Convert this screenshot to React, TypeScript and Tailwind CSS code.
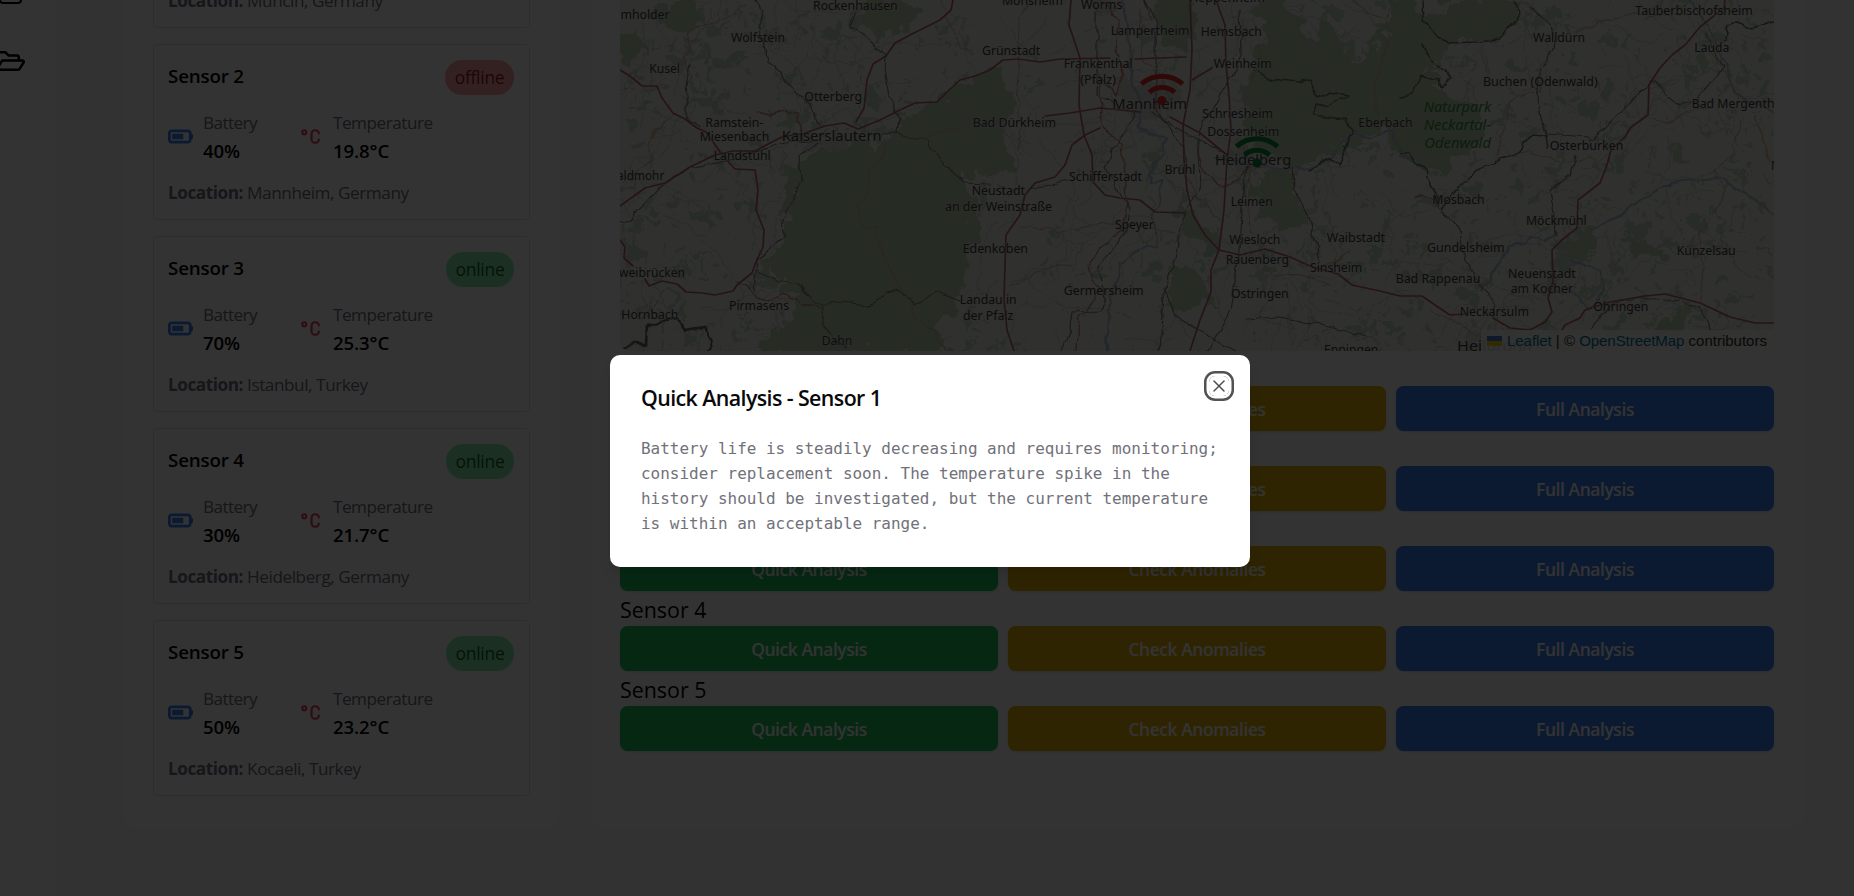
import React from "react";
import { X } from "lucide-react";
import { FaRegFolderOpen } from "react-icons/fa";
import { FaBatteryThreeQuarters } from "react-icons/fa6";
import { TbTemperatureCelsius } from "react-icons/tb";

type Sensor = { name: string; status: "online" | "offline"; battery: string; temperature: string; location: string };

const sensors: Sensor[] = [
  { name: "Sensor 1", status: "online", battery: "60%", temperature: "22.5°C", location: "Muncin, Germany" },
  { name: "Sensor 2", status: "offline", battery: "40%", temperature: "19.8°C", location: "Mannheim, Germany" },
  { name: "Sensor 3", status: "online", battery: "70%", temperature: "25.3°C", location: "Istanbul, Turkey" },
  { name: "Sensor 4", status: "online", battery: "30%", temperature: "21.7°C", location: "Heidelberg, Germany" },
  { name: "Sensor 5", status: "online", battery: "50%", temperature: "23.2°C", location: "Kocaeli, Turkey" },
];

// Map labels: text, left x, right x, vertical centre, font size
type Label = [string, number, number, number, number?];
const labels: Label[] = [
  ["mholder", 620.5, 669.5, 15], ["Rockenhausen", 813, 897.7, 6], ["Wolfstein", 731, 785, 38.3],
  ["Kusel", 649.3, 680, 68.5], ["Otterberg", 804.3, 862, 96.5], ["Ramstein-", 705.3, 763.3, 122.5],
  ["Miesenbach", 699.7, 769.3, 137], ["Landstuhl", 713.7, 770.7, 156], ["Kaiserslautern", 781.7, 881.7, 136.5, 15],
  ["aldmohr", 617, 664.3, 175.5], ["weibrücken", 619, 685, 272.5], ["Pirmasens", 729, 789, 306],
  ["Hornbach", 621.3, 678.3, 315], ["Dahn", 821.7, 852.3, 341], ["Bad Dürkheim", 972.7, 1056, 122.5],
  ["Grünstadt", 982, 1040.3, 51], ["Neustadt", 971.7, 1025, 191], ["an der Weinstraße", 945, 1052, 207],
  ["Edenkoben", 962.7, 1028, 249], ["Landau in", 959.7, 1016.7, 300], ["der Pfalz", 963, 1013.3, 315.5],
  ["Monsheim", 1002, 1063, 1], ["Worms", 1081, 1122.3, 4.5], ["Lampertheim", 1110.7, 1189.3, 30.5],
  ["Heppenheim", 1189, 1265, -2], ["Hemsbach", 1200.7, 1261.7, 32], ["Frankenthal", 1063.7, 1132.7, 63.5],
  ["(Pfalz)", 1080.3, 1116, 79.5], ["Weinheim", 1213.7, 1271.7, 63.5], ["Mannheim", 1112.3, 1187, 104, 15],
  ["Schriesheim", 1202.3, 1273, 114], ["Dossenheim", 1207.3, 1279.3, 132], ["Heidelberg", 1215, 1291.3, 160, 15],
  ["Eberbach", 1358.3, 1412.7, 122.5], ["Brühl", 1164.7, 1195.3, 170], ["Schifferstadt", 1069, 1142, 176.5],
  ["Leimen", 1230.7, 1272.7, 202], ["Speyer", 1115, 1153.7, 225], ["Wiesloch", 1229.3, 1280.3, 240],
  ["Rauenberg", 1225.7, 1289, 259.5], ["Waibstadt", 1326.7, 1385, 238], ["Sinsheim", 1310, 1362.3, 268],
  ["Germersheim", 1063.7, 1143.7, 290.5], ["Östringen", 1231, 1288.7, 294], ["Bad Rappenau", 1395.7, 1480.3, 279],
  ["Eppingen", 1324, 1378.3, 350], ["Tauberbischofsheim", 1635.3, 1752.7, 10.5], ["Walldürn", 1533, 1585, 38],
  ["Lauda", 1694.3, 1729.3, 47.5], ["Buchen (Odenwald)", 1483, 1597.7, 82], ["Bad Mergenth", 1691.7, 1774.5, 103.5],
  ["Osterburken", 1549.7, 1623.3, 145.5], ["Mosbach", 1432.3, 1484.7, 200], ["Möckmühl", 1526, 1586.7, 220.5],
  ["Gundelsheim", 1427, 1504.7, 247.5], ["Künzelsau", 1676.7, 1735.7, 250.5], ["Neuenstadt", 1508, 1575.7, 273.5],
  ["am Kocher", 1510.7, 1573, 289], ["Öhringen", 1593.3, 1648.3, 307], ["Neckarsulm", 1459.7, 1529, 312],
  ["Heilbronn", 1457, 1532, 346, 15], ["N", 1771, 1780, 166], ["Amorbach", 1463, 1523, -4],
];

const parkLabels: Label[] = [
  ["Naturpark", 1423.7, 1491.3, 107], ["Neckartal-", 1423.7, 1491, 125], ["Odenwald", 1424.3, 1491, 143],
];

const motorways = [
  "620,70 630,76 642,86 657,86 662,98 673,113 685,119 697,128 706,132 716,146 722,155 735,169 755,170 758,190 756,210 764,230 763,247 756,262 752,273 737,285 733,291 715,295 702,293 686,292 677,284 662,281 649,286 645,279",
  "620,206 645,188 665,183 690,167 715,155 733,151 755,151 770,143 782,137 805,133 825,126 844,123 858,129 880,120 898,111 915,103 937,102 947,92 960,80 975,76 990,70 1003,60 1018,59 1040,62 1060,59 1110,58",
  "1135,59 1186,57",
  "856,122 864,108 867,80 873,64 886,56 895,43 912,34 940,20 951,10 953,0",
  "1071,0 1069,25 1080,58 1079,105 1084,135 1092,155 1093,182 1105,195 1120,198 1140,200 1155,212 1185,213",
  "1100,128 1085,135 1072,145 1065,165 1055,177 1035,183 1025,195 1020,215 1006,235 1005,265 1004,300 1007,330 1014,351",
  "1045,116 1070,113 1100,108 1140,112",
  "1190,0 1192,50 1190,90 1183,125 1184,160 1187,190 1193,215 1205,235 1219,250 1211,270 1211,292 1200,320 1190,351",
  "1216,0 1225,25 1226,65 1229,95 1231,130 1227,160 1224,210 1219,250",
  "1170,117 1200,133 1227,155",
  "1192,80 1212,68",
  "1219,250 1240,255 1265,249 1290,257 1310,266 1338,274 1352,285 1380,291 1400,296 1422,296 1435,305 1450,315 1465,314",
  "1493,318 1510,328 1530,330 1545,322 1552,312 1548,298 1553,282 1552,250 1562,240 1577,228 1578,200 1600,183 1607,165 1611,150 1625,137 1630,128 1648,115 1649,85 1660,68 1672,55 1685,45 1700,27 1715,15 1724,8 1725,0",
  "1562,330 1565,325 1580,318 1585,310 1610,302 1645,296 1665,294 1700,303 1730,317 1755,323 1774,323",
  "620,240 625,247 624,258 633,266",
];

const trunkRoads = [
  "757,112 770,115 785,110 798,112 801,130 803,140",
  "736,283 747,284 757,297 770,301 780,295 797,299 800,307 820,307",
  "1100,0 1118,20 1117,50 1124,75 1117,95 1100,75 1101,125 1122,145 1127,195 1124,230 1100,247 1088,265 1092,280 1100,289 1090,308 1078,318 1076,351",
  "1197,150 1205,175 1225,187 1238,178 1250,165",
  "1145,0 1150,18",
  "1415,199 1425,195 1434,200 1441,209",
];

const primaryRoads = [
  "740,5 732,15 715,22 700,25 686,33 690,48 684,58 692,75",
  "675,115 655,130 648,145 652,160 637,170 622,180",
  "886,140 885,155 870,165 868,190 858,205 863,227 877,228 880,245 893,275 901,290 912,300 912,317 935,332 945,351",
  "945,18 955,32 962,50 975,50",
  "930,137 940,130 970,129",
  "1030,0 1020,20 1019,55 1017,90 1020,115 1019,150",
  "1140,10 1142,60 1160,72 1170,105",
  "1020,225 1060,232 1110,222 1150,228 1185,235",
  "1010,286 1040,270 1075,264",
  "1180,165 1200,200 1220,222",
  "1243,135 1250,170 1248,215 1252,235",
  "1260,45 1262,60 1250,80",
  "1390,0 1387,40 1375,95 1378,130",
  "1353,0 1365,12 1388,20",
  "1250,250 1272,275 1305,276 1330,285",
  "1315,270 1338,260 1350,250",
  "1557,35 1552,55 1540,65 1541,90 1510,100 1505,125 1497,155",
  "1575,32 1600,22 1630,14 1680,15",
  "1500,158 1530,152 1560,162 1590,158",
  "1745,115 1735,140 1733,155 1713,172 1725,190 1715,210 1700,235 1703,280 1701,302",
  "1650,118 1672,123 1685,112 1710,108",
  "1755,115 1770,160",
  "1710,50 1730,80 1738,100",
  "1430,310 1465,328 1500,345",
  "620,90 650,89 665,86",
  "665,290 652,310 664,330 662,351",
];

const railways = [
  "755,0 764,12 759,28 765,50 768,62 782,72 785,82 797,92 810,105 819,125",
  "856,12 850,27 865,33 876,48 886,55 885,75 889,95 899,118 897,134",
  "690,62 686,85 688,105 685,118 700,127",
  "620,222 630,220 663,183 690,168 730,160 785,143 820,140",
  "820,143 799,155 801,180 790,205 780,228 785,235 770,250 757,260 754,290",
  "757,270 778,281 797,282 815,304 840,302 870,305 897,289 914,304 935,292 960,301",
  "823,305 823,325 832,335 847,350",
  "883,135 897,134 915,139 928,139 930,150 950,170 965,183 990,184",
  "1097,10 1097,95 1115,103",
  "1145,0 1156,20 1156,110 1165,120 1185,150 1187,165",
  "1135,112 1104,168 1130,210 1127,230 1097,268 1101,280",
  "1150,112 1227,155",
  "1240,10 1241,55 1235,70 1200,130 1198,155 1201,185 1182,220 1176,255 1163,295 1160,351",
  "1163,290 1175,315 1215,340 1235,351",
  "1247,165 1243,190 1240,250 1230,310 1208,351",
  "1292,170 1295,190 1310,220 1320,260",
  "1102,285 1105,298 1100,311 1072,312 1069,335 1062,350",
  "1025,191 1070,181",
  "1245,320 1280,318 1320,325 1365,335",
  "1530,8 1550,25 1555,48 1540,70 1537,100 1545,135 1590,138",
  "1590,140 1615,120 1640,92 1655,80 1665,95 1680,106 1695,102 1723,66 1705,33",
  "1575,155 1570,175 1550,190 1554,215 1555,235",
  "1441,212 1460,228 1464,260 1482,285 1496,305 1492,318",
  "1592,330 1600,315 1612,305 1640,297 1680,302 1700,308 1712,330",
];

const boundaries = [
  "1422,0 1423,20 1437,35 1450,43 1475,42 1500,40 1508,30 1521,15 1515,3",
  "1400,97 1412,95 1420,75 1440,80 1442,88 1449,80 1445,70 1431,60 1423,45",
  "1310,170 1330,158 1340,166 1348,135 1352,135 1345,118 1313,115 1316,105 1330,108 1346,95 1330,92 1317,98 1310,80 1300,83 1270,80 1258,70",
  "1443,210 1455,190 1470,178 1485,165 1495,164 1500,158 1520,153 1523,142 1535,135 1545,137 1547,148",
  "1400,153 1408,153 1415,163 1427,168 1428,180 1435,192 1440,205",
  "1725,40 1727,25 1738,22 1753,28 1774,20",
];

const rivers = [
  "1122,0 1128,30 1130,60 1132,85 1142,105 1138,125 1148,135 1165,138 1163,155 1150,175 1149,183 1163,180 1160,205 1150,213 1155,230 1158,245 1140,250 1120,265 1110,300 1107,351",
  "1215,158 1250,165 1290,170 1310,168 1330,160 1345,138 1355,133 1370,138 1392,130 1402,155 1425,170",
  "1502,258 1510,245 1525,243 1530,238 1545,240 1556,232",
  "1482,290 1490,275 1505,255",
  "1690,0 1710,30 1725,60 1735,95 1774,112",
  "1590,230 1620,215 1640,200 1680,180 1720,178 1750,195 1774,215",
  "1570,290 1590,310 1605,290 1600,270 1570,260",
];

const forests = [
  "800,160 790,205 782,250 770,262 790,285 800,310 775,335 760,351 950,351 935,330 958,300 970,250 975,215 960,185 950,165 975,140 990,110 1000,85 985,78 950,100 900,120 885,145 840,150",
  "870,5 900,0 915,15 905,30 880,32 865,20",
  "1000,70 1010,100 1005,150 1010,170 990,180 950,160 930,135 945,105",
  "1258,0 1268,35 1255,70 1245,105 1258,140 1300,165 1330,150 1390,120 1400,90 1425,70 1445,40 1500,38 1520,10 1510,0 1450,0 1430,20 1400,0 1380,50 1350,60 1330,20 1310,50 1290,0",
  "1160,0 1190,0 1192,50 1165,40",
  "1410,60 1440,90 1470,110 1485,130 1470,150 1440,170 1425,160 1400,150 1385,120",
  "1255,180 1290,175 1300,215 1280,225 1262,215",
  "1180,200 1190,215 1215,235 1215,250 1190,240",
  "1175,270 1205,275 1210,300 1185,305 1170,295",
  "1562,240 1580,232 1592,245 1588,260 1565,262",
  "1630,240 1660,240 1660,250 1640,258",
  "1660,325 1690,308 1680,325 1665,332",
  "650,20 690,0 700,20 680,30",
  "620,40 640,38 645,50 625,60",
];

// Small deterministic generator so that the terrain is the same on every render
function seeded(seed: number) {
  let s = seed;
  return () => {
    s = (s * 1664525 + 1013904223) % 4294967296;
    return s / 4294967296;
  };
}

function buildTerrain() {
  const rnd = seeded(42);
  const woods: string[] = [];
  for (let i = 0; i < 1500; i++) {
    const cx = 620 + rnd() * 1154;
    const cy = rnd() * 351;
    if (cx > 985 && cx < 1240 && rnd() < 0.75) continue;
    const r = 1.5 + rnd() * rnd() * 8;
    const n = 7;
    let d = "";
    for (let k = 0; k < n; k++) {
      const a = (k / n) * Math.PI * 2;
      const rr = r * (0.35 + rnd() * 1.1);
      d += (k ? "L" : "M") + (cx + Math.cos(a) * rr).toFixed(1) + " " + (cy + Math.sin(a) * rr).toFixed(1);
    }
    woods.push(d + "Z");
  }
  const lanes: string[] = [];
  for (let i = 0; i < 420; i++) {
    let x = 620 + rnd() * 1154;
    let y = rnd() * 351;
    let a = rnd() * Math.PI * 2;
    if (x > 790 && x < 970 && y > 150) continue;
    let d = `M${x.toFixed(1)} ${y.toFixed(1)}`;
    const steps = 4 + Math.floor(rnd() * 7);
    for (let k = 0; k < steps; k++) {
      a += (rnd() - 0.5) * 1.3;
      x += Math.cos(a) * 8;
      y += Math.sin(a) * 8;
      d += `L${x.toFixed(1)} ${y.toFixed(1)}`;
    }
    lanes.push(d);
  }
  return { woods: woods.join(""), lanes: lanes.join("") };
}

const terrain = buildTerrain();

function Lines({ list, color, width }: { list: string[]; color: string; width: number }) {
  return (
    <g fill="none" stroke={color} strokeWidth={width} strokeLinejoin="round" strokeLinecap="round">
      {list.map((p) => (
        <polyline key={p} points={p} />
      ))}
    </g>
  );
}

function Marker({ x, y, color }: { x: number; y: number; color: string }) {
  return (
    <g transform={`translate(${x} ${y})`} fill="none" stroke={color} strokeWidth="5">
      <path d="M-20.6 10A31 31 0 0 1 20.6 10" />
      <path d="M-12.6 18.4A19 19 0 0 1 12.6 18.4" />
      <circle cx="0" cy="26.4" r="4.5" fill={color} stroke="none" />
    </g>
  );
}

function MapView() {
  return (
    <div className="relative h-[351px] w-full shrink-0 overflow-hidden rounded-b-[10px]">
      <svg viewBox="620 0 1154 351" width="1154" height="351" className="block">
        <defs>
          <filter id="rough" x="-5%" y="-5%" width="110%" height="110%">
            <feTurbulence type="fractalNoise" baseFrequency="0.06" numOctaves="3" seed="4" />
            <feDisplacementMap in="SourceGraphic" scale="34" xChannelSelector="R" yChannelSelector="G" />
          </filter>
          <filter id="wobble" filterUnits="userSpaceOnUse" x="600" y="-20" width="1200" height="400">
            <feTurbulence type="fractalNoise" baseFrequency="0.07" numOctaves="2" seed="9" />
            <feDisplacementMap in="SourceGraphic" scale="8" xChannelSelector="R" yChannelSelector="G" />
          </filter>
        </defs>
        <rect x="620" y="0" width="1154" height="351" fill="#f0efe8" />
        <g fill="#bfd5b3" filter="url(#rough)">
          <path d={terrain.woods} opacity="0.8" />
          {forests.map((p) => (
            <polygon key={p} points={p} stroke="#bfd5b3" strokeWidth="6" strokeLinejoin="round" />
          ))}
        </g>
        <g fill="#dcdcd8" filter="url(#rough)">
          <ellipse cx="1150" cy="100" rx="30" ry="20" />
          <ellipse cx="1245" cy="160" rx="13" ry="14" />
          <ellipse cx="825" cy="142" rx="25" ry="7" />
          <ellipse cx="1492" cy="340" rx="28" ry="12" />
          <ellipse cx="1100" cy="5" rx="16" ry="10" />
        </g>
        <g filter="url(#wobble)">
          <path d={terrain.lanes} fill="none" stroke="#cfcdd2" strokeWidth="0.9" />
          <Lines list={rivers} color="#adc0d4" width={2.2} />
          <Lines list={primaryRoads} color="#d8b68c" width={1.1} />
          <Lines list={trunkRoads} color="#cc8a74" width={1.4} />
          <Lines list={railways} color="#86817f" width={1.2} />
          <Lines list={boundaries} color="#6f756c" width={1.5} />
          <Lines list={["625,349 632,344 647,344 648,326 665,320 680,318 684,330 705,327 712,340 707,351"]} color="#6b6b6b" width={2.6} />
        </g>
        <Lines list={motorways} color="#be6079" width={1.7} />
        <g fontFamily="'Noto Sans', sans-serif" fill="#434343" stroke="#e9e9e2" strokeOpacity="0.5" strokeWidth="1.6" paintOrder="stroke">
          {labels.map(([t, x0, x1, y, size]) => (
            <text key={t} x={x0} y={y + (size ?? 12.6) * 0.33} fontSize={size ?? 12.6} textLength={x1 - x0} lengthAdjust="spacingAndGlyphs">
              {t}
            </text>
          ))}
        </g>
        <g fontFamily="'Noto Sans', sans-serif" fontStyle="italic" fill="#3f8f40">
          {parkLabels.map(([t, x0, x1, y]) => (
            <text key={t} x={x0} y={y + 5} fontSize="14" textLength={x1 - x0} lengthAdjust="spacingAndGlyphs">
              {t}
            </text>
          ))}
        </g>
        <Marker x={1162} y={74} color="#e8302a" />
        <Marker x={1257} y={136.7} color="#0a8a3e" />
      </svg>
      <div className="absolute right-0 bottom-0 flex h-[21px] w-[293px] items-center bg-white/80 pl-[6px] font-['Liberation_Sans',sans-serif] text-[15px] leading-[21px] whitespace-pre text-[#333]">
        <svg width="15" height="10" viewBox="0 0 15 10" className="mr-[5px]">
          <path fill="#4C7BE1" d="M0 0h15v5H0z" />
          <path fill="#FFD500" d="M0 5h15v5H0z" />
        </svg>
        <span className="tracking-[-0.05px] text-[#0078A8]">Leaflet</span>
        <span> | © </span>
        <span className="tracking-[-0.05px] text-[#0078A8]">OpenStreetMap</span>
        <span> contributors</span>
      </div>
    </div>
  );
}

function SensorCard({ sensor }: { sensor: Sensor }) {
  const online = sensor.status === "online";
  return (
    <div className="flex h-[176px] shrink-0 flex-col rounded-[5px] border border-[#dfe2e6] px-[14px] pt-[15px]">
      <div className="flex h-[35px] items-center justify-between pr-px">
        <span className="-mt-[2px] text-[18.8px] font-semibold tracking-[-0.2px] text-black">{sensor.name}</span>
        <span
          className={
            online
              ? "flex h-[35px] w-[68px] items-center justify-center rounded-[17px] bg-[#86efac] text-[17.4px] tracking-[-0.25px] text-[#166534]"
              : "flex h-[35px] w-[69px] items-center justify-center rounded-[17px] bg-[#fca5a5] text-[17.4px] tracking-[-0.25px] text-[#991b1b]"
          }
        >
          {sensor.status}
        </span>
      </div>
      <div className="mt-[14px] flex gap-[40px]">
        <div className="flex w-[90px] items-center gap-[10px]">
          <FaBatteryThreeQuarters className="size-[25px] shrink-0 text-[#3b82f6]" />
          <div className="leading-[27.5px]">
            <div className="text-[17.2px] tracking-[-0.6px] text-[#6b7280]">Battery</div>
            <div className="text-[18.6px] font-semibold tracking-[-0.1px] text-black">{sensor.battery}</div>
          </div>
        </div>
        <div className="flex items-center gap-[10px]">
          <TbTemperatureCelsius className="size-[25px] shrink-0 text-[#ef4444]" />
          <div className="leading-[27.5px]">
            <div className="text-[17.2px] tracking-[-0.5px] text-[#6b7280]">Temperature</div>
            <div className="text-[18.6px] font-semibold tracking-[-0.1px] text-black">{sensor.temperature}</div>
          </div>
        </div>
      </div>
      <div className="mt-[15px] text-[17.2px] leading-[27.5px] tracking-[-0.45px] text-[#6b7280]">
        <span className="font-bold">Location:</span> {sensor.location}
      </div>
    </div>
  );
}

function ActionRow({ name }: { name: string }) {
  const base =
    "flex h-[45px] items-center justify-center rounded-[7.5px] pt-[2px] text-[17.4px] font-semibold tracking-[-0.4px] text-white shadow";
  return (
    <div className="shrink-0">
      <div className="h-[35px] pt-px text-[21.4px] leading-[35px] font-medium tracking-[0px] text-black">{name}</div>
      <div className="grid grid-cols-3 gap-[10px]">
        <button className={`${base} bg-[#22c55e]`}>Quick Analysis</button>
        <button className={`${base} bg-[#eab308]`}>Check Anomalies</button>
        <button className={`${base} bg-[#3b82f6]`}>Full Analysis</button>
      </div>
    </div>
  );
}

export default function App() {
  return (
    <div className="relative h-[896px] w-full overflow-hidden bg-[#f9fafb] font-['Open_Sans','Noto_Sans',sans-serif]">
      <div className="flex h-full">
        <aside className="flex h-full w-[57px] shrink-0 flex-col items-start bg-white">
          <div className="-ml-px h-[4px] w-[23px] rounded-b-[4px] border-x-2 border-b-2 border-black" />
          <FaRegFolderOpen className="mt-[42px] -ml-[5px] size-[30px] text-black" />
        </aside>
        <main className="flex h-full flex-1 gap-[31px] pr-[50px] pb-[68px] pl-[66px]">
          <section className="flex w-[437px] shrink-0 flex-col justify-end gap-[16px] rounded-b-[15px] bg-white px-[30px] pb-[32px]">
            {sensors.map((s) => (
              <SensorCard key={s.name} sensor={s} />
            ))}
          </section>
          <section className="flex flex-1 flex-col justify-end rounded-b-[15px] bg-white pr-[30px] pb-[77px] pl-[29px]">
            <MapView />
            {sensors.map((s) => (
              <ActionRow key={s.name} name={s.name} />
            ))}
          </section>
        </main>
      </div>

      <div className="absolute inset-0 flex bg-black/80 pt-[355px] pl-[610px]">
        <div role="dialog" className="relative h-[212px] w-[640px] rounded-[10px] bg-white px-[31px] pt-[31px] shadow-lg">
          <h2 className="h-[25px] text-[21.4px] leading-[24px] font-semibold tracking-[-0.6px] whitespace-nowrap text-[#09090b]">
            Quick Analysis - Sensor 1
          </h2>
          <p className="mt-[25px] font-['DejaVu_Sans_Mono',monospace] text-[15.98px] leading-[25px] text-[#71717a]">
            Battery life is steadily decreasing and requires monitoring; consider replacement soon. The temperature spike in
            the history should be investigated, but the current temperature is within an acceptable range.
          </p>
          <button className="absolute top-[21px] right-[21px] flex size-[20px] items-center justify-center rounded-[6px] opacity-70 ring-[2.5px] ring-[#09090b] ring-offset-[2.5px]">
            <X className="size-[20px]" strokeWidth={1.8} />
          </button>
        </div>
      </div>
    </div>
  );
}
